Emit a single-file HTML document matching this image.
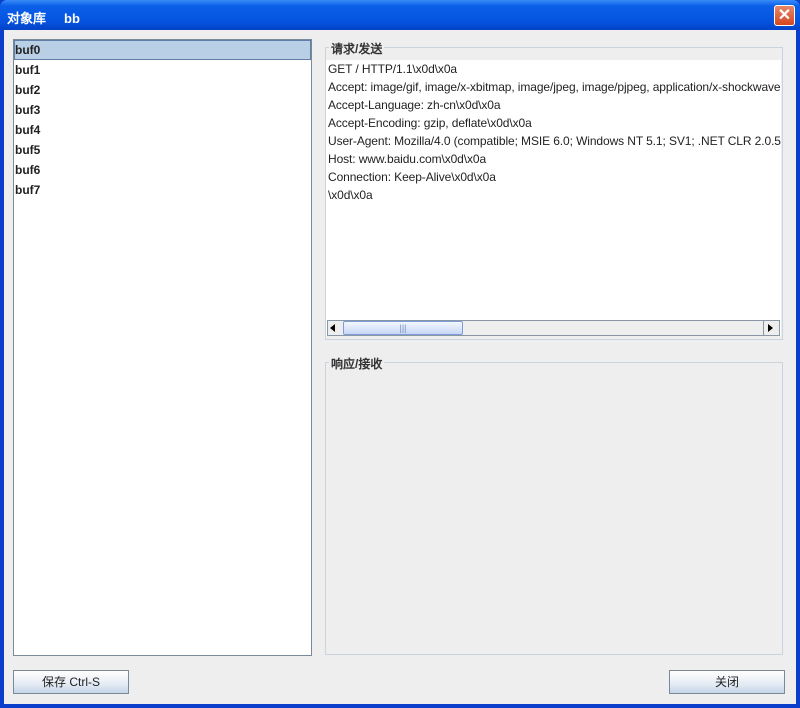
<!DOCTYPE html>
<html><head><meta charset="utf-8"><style>
*{margin:0;padding:0;box-sizing:border-box}
body{width:800px;height:708px;position:relative;background:#0a3ecb;font-family:"Liberation Sans","WenQuanYi Zen Hei",sans-serif;overflow:hidden}
.tb{position:absolute;left:0;top:0;width:800px;height:30px;background:linear-gradient(#3a8cf8,#0a5fe8 20%,#0554e0 70%,#0442c8);border-radius:7px 7px 0 0}
.tt{position:absolute;left:7px;top:8px;color:#fff;font-weight:bold;font-size:13px;font-family:"WenQuanYi Zen Hei",sans-serif;white-space:pre}
.x{position:absolute;left:774px;top:5px;width:21px;height:21px;border:1px solid #fff;border-radius:3px;background:linear-gradient(#e8866a,#d5471f);color:#fff;font-size:16px;font-weight:bold;text-align:center;line-height:19px}
.c{position:absolute;left:4px;top:30px;width:792px;height:674px;background:#eeeeee}
.list{position:absolute;left:13px;top:39px;width:299px;height:617px;background:#fff;border:1px solid #7a8a99}
.it{height:20px;font-size:12px;font-weight:bold;line-height:20px;padding-left:1px;color:#222}
.sel{background:#b8cfe5;border:1px solid #5f7fa8;line-height:18px;padding-left:0}
.g{position:absolute;border:1px solid #c9d4de}
.gl{position:absolute;background:#eeeeee;font-size:12px;font-weight:bold;padding:0 2px;font-family:"WenQuanYi Zen Hei",sans-serif;color:#333}
.ta{position:absolute;left:326px;top:60px;width:455px;height:276px;background:#fff;overflow:hidden}
.ln{font-size:12px;height:18px;line-height:18px;padding-left:2px;white-space:nowrap;color:#222;letter-spacing:-0.1px}
.sb{position:absolute;left:327px;top:320px;width:453px;height:16px;background:#eeeeee;border:1px solid #8896a6}
.btn{position:absolute;height:24px;border:1px solid #7a8a99;background:linear-gradient(#fff,#e4ebf4 60%,#c5d4e8);font-size:12px;font-weight:bold;text-align:center;line-height:22px;font-family:"WenQuanYi Zen Hei",sans-serif;color:#222}
</style></head><body>
<div class="tb"><div class="tt">对象库     bb</div><div class="x">✕</div></div>
<div class="c"></div>
<div class="list">
<div class="it sel">buf0</div><div class="it">buf1</div><div class="it">buf2</div><div class="it">buf3</div><div class="it">buf4</div><div class="it">buf5</div><div class="it">buf6</div><div class="it">buf7</div>
</div>
<div class="g" style="left:325px;top:47px;width:458px;height:293px"></div>
<div class="gl" style="left:329px;top:40px">请求/发送</div>
<div class="ta">
<div class="ln">GET / HTTP/1.1\x0d\x0a</div>
<div class="ln">Accept: image/gif, image/x-xbitmap, image/jpeg, image/pjpeg, application/x-shockwave-flash</div>
<div class="ln">Accept-Language: zh-cn\x0d\x0a</div>
<div class="ln">Accept-Encoding: gzip, deflate\x0d\x0a</div>
<div class="ln">User-Agent: Mozilla/4.0 (compatible; MSIE 6.0; Windows NT 5.1; SV1; .NET CLR 2.0.50727)</div>
<div class="ln">Host: www.baidu.com\x0d\x0a</div>
<div class="ln">Connection: Keep-Alive\x0d\x0a</div>
<div class="ln">\x0d\x0a</div>
</div>
<div class="sb">
<div style="position:absolute;left:2px;top:3px;width:0;height:0;border-top:4px solid transparent;border-bottom:4px solid transparent;border-right:5px solid #000"></div>
<div style="position:absolute;left:15px;top:0;width:120px;height:14px;border:1px solid #7d9dd6;border-radius:2px;background:linear-gradient(#f4f8ff,#c6d6f4);text-align:center;font-size:9px;line-height:12px;color:#7a8fbf">|||</div>
<div style="position:absolute;left:435px;top:0;width:1px;height:14px;background:#8896a6"></div>
<div style="position:absolute;left:440px;top:3px;width:0;height:0;border-top:4px solid transparent;border-bottom:4px solid transparent;border-left:5px solid #000"></div>
</div>
<div class="g" style="left:325px;top:362px;width:458px;height:293px"></div>
<div class="gl" style="left:329px;top:355px">响应/接收</div>
<div class="btn" style="left:13px;top:670px;width:116px;font-weight:normal">保存 Ctrl-S</div>
<div class="btn" style="left:669px;top:670px;width:116px;font-weight:normal">关闭</div>
</body></html>
